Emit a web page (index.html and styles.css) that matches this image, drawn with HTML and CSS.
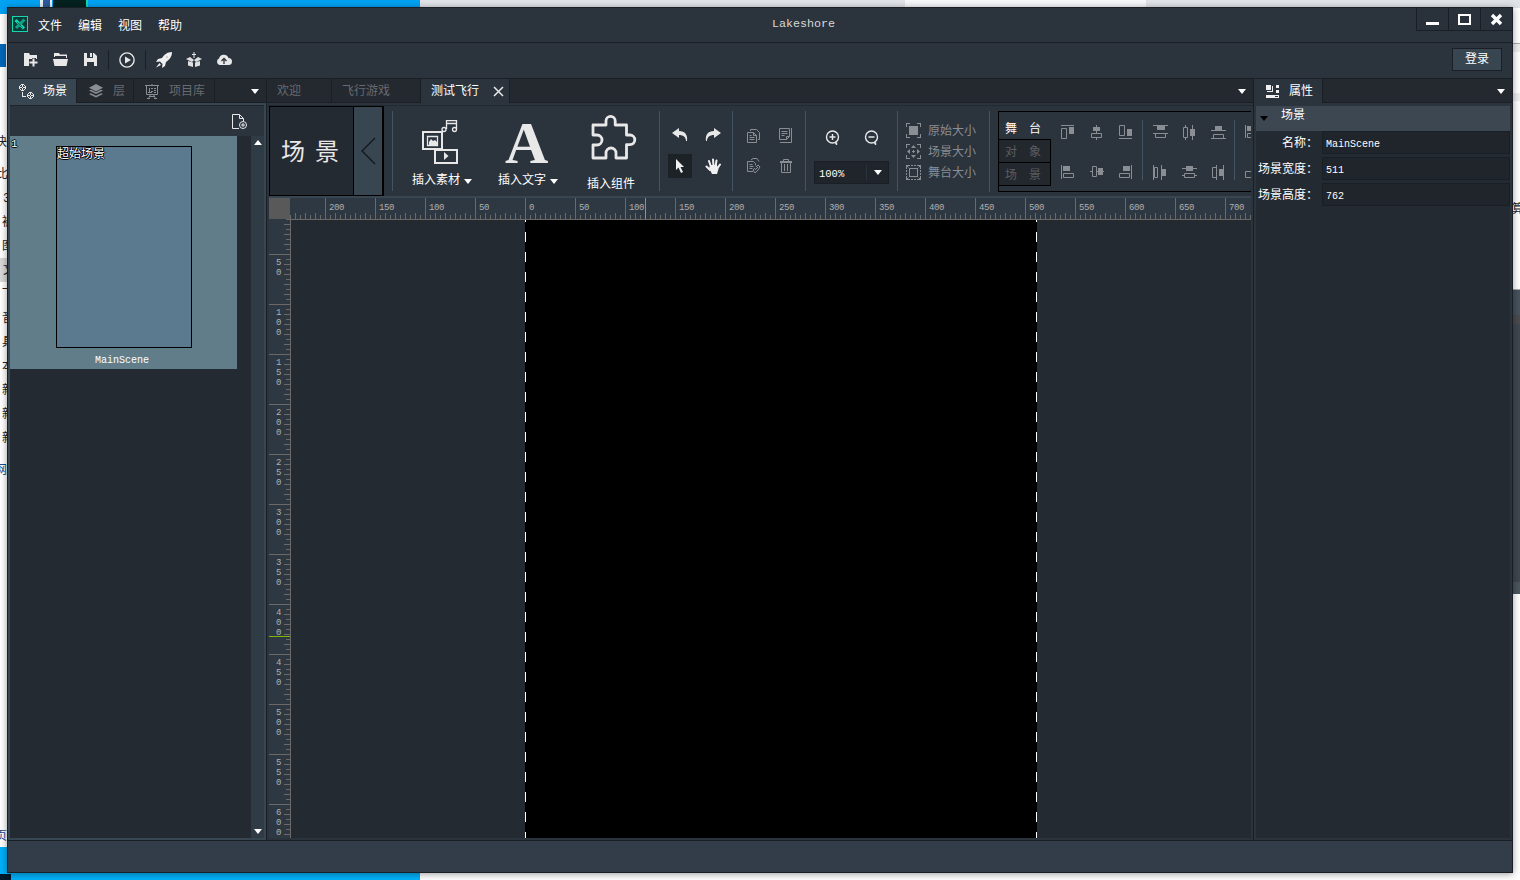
FILE: index.html
```
<!DOCTYPE html>
<html lang="zh-CN">
<head>
    <meta charset="UTF-8">
    <title>Lakeshore</title>

    <link rel="stylesheet" href="styles.css">
</head>
<body>

<div class="desktop">

    <!-- what sticks out from behind the window -->
    <div class="desktop__browser"></div>
    <div class="desktop__page"></div>
    <div class="desktop__blue"></div>
    <div class="desktop__mark"></div>
    <div class="desktop__app"></div>
    <div class="desktop__app-bottom"></div>
    <div class="desktop__shortcut"></div>
    <div class="desktop__tile"></div>
    <span class="desktop__text" style="left: -5px; top: 136px">快</span>
    <span class="desktop__text" style="left: -4px; top: 168px">比</span>
    <span class="desktop__text" style="left: 3px; top: 192px">3</span>
    <span class="desktop__text" style="left: 2px; top: 216px">被</span>
    <span class="desktop__text" style="left: 2px; top: 240px">图</span>
    <span class="desktop__text desktop__text--active" style="left: 0; top: 258px">文</span>
    <span class="desktop__text" style="left: 2px; top: 284px">一</span>
    <span class="desktop__text" style="left: 2px; top: 312px">音</span>
    <span class="desktop__text" style="left: 2px; top: 336px">具</span>
    <span class="desktop__text" style="left: 2px; top: 360px">本</span>
    <span class="desktop__text" style="left: 2px; top: 384px">新</span>
    <span class="desktop__text" style="left: 2px; top: 408px">新</span>
    <span class="desktop__text" style="left: 2px; top: 432px">新</span>
    <span class="desktop__text desktop__text--blue" style="left: -5px; top: 464px">网</span>
    <span class="desktop__text desktop__text--blue" style="left: -5px; top: 830px">页</span>
    <span class="desktop__text" style="left: 1512px; top: 203px">算</span>

    <div class="window">

        <div class="titlebar">
            <svg class="titlebar__logo" width="16" height="16" viewBox="0 0 16 16">
                <rect x=".5" y=".5" width="15" height="15" fill="#0b3b38" stroke="#14d7b0"/>
                <path d="M3.500 4l8.500 8.500" stroke="#14d7b0" stroke-width="3"/>
                <path d="M12.500 3.500L4 12" stroke="#0fa488" stroke-width="3"/>
                <path d="M5 6l5.500 5.500" stroke="#0b6a5c"/>
            </svg>
            <ul class="menu">
                <li>文件</li>
                <li>编辑</li>
                <li>视图</li>
                <li>帮助</li>
            </ul>
            <div class="titlebar__name">Lakeshore</div>
            <div class="controls">
                <button type="button" class="controls__btn">
                    <svg width="13" height="13"><path d="M0 9h13v3H0z" fill="#fff"/></svg>
                </button>
                <button type="button" class="controls__btn">
                    <svg width="13" height="13"><path d="M1 2h11v9H1z" fill="none" stroke="#fff" stroke-width="2"/></svg>
                </button>
                <button type="button" class="controls__btn">
                    <svg width="13" height="13"><path d="M2 2l9 9M11 2l-9 9" stroke="#fff" stroke-width="3.4"/></svg>
                </button>
            </div>
        </div>

        <div class="toolbar">
            <svg class="toolbar__icon" width="16" height="16" viewBox="0 0 16 16">
                <path d="M1 1h5l1 2h7v4H6v7H1z" fill="#e8e8e8"/>
                <path d="M11 6v9M6 10.500h9" stroke="#2b333d" stroke-width="4"/>
                <path d="M10.500 6.500v8M6.500 10.500h8" stroke="#e8e8e8" stroke-width="2"/>
            </svg>
            <svg class="toolbar__icon" width="16" height="16" viewBox="0 0 16 16">
                <path d="M1 1h5l1 1.500h7V6h-1V4H2v1H1zM0 7h15l-1.500 7h-12z" fill="#e8e8e8"/>
            </svg>
            <svg class="toolbar__icon toolbar__icon--save" width="16" height="16" viewBox="0 0 16 16">
                <path d="M1 1h10l3 3v10H1z" fill="#e8e8e8"/>
                <path d="M4 1h6v5H4zM4 10h7v4H4z" fill="#2b333d"/>
                <path d="M7 1h2v4H7z" fill="#e8e8e8"/>
            </svg>
            <span class="toolbar__line"></span>
            <svg class="toolbar__icon" width="16" height="16" viewBox="0 0 16 16">
                <circle cx="8" cy="8" r="7.1" fill="none" stroke="#e8e8e8" stroke-width="1.4"/>
                <path d="M6 4.500l6 3.500-6 3.500z" fill="#e8e8e8"/>
            </svg>
            <span class="toolbar__line"></span>
            <svg class="toolbar__icon" width="16" height="16" viewBox="0 0 16 16">
                <path d="M16 0c-5 0-8 3-10 6L2 7 0 10l4-.5L6.500 12 6 16l3-2 1-4c3-2 6-5 6-10z" fill="#f0f0f0"/>
                <path d="M3.500 11L0 15.500 5 13z" fill="#f0f0f0"/>
                <circle cx="11" cy="5" r="1.300" fill="#cfd3d6"/>
            </svg>
            <svg class="toolbar__icon" width="16" height="16" viewBox="0 0 16 16">
                <path d="M2 9l5 1.500V15l-5-1.500zM9 10.500L14 9v4.500L9 15zM0 7l4-2 4 3-2 2zM16 7l-4-2-4 3 2 2z" fill="#e0e0e0"/>
                <path d="M8 0v6M6 2.500h4" fill="none" stroke="#e8e8e8"/>
            </svg>
            <svg class="toolbar__icon" width="16" height="16" viewBox="0 0 16 16">
                <path d="M3.500 13a3.500 3.500 0 0 1-.5-6.500 5 5 0 0 1 9.500-.5 3.500 3.500 0 0 1 0 7z" fill="#e8e8e8"/>
                <path d="M8 12V6.500M5.500 9L8 6.500 10.500 9" fill="none" stroke="#2b333d" stroke-width="1.300"/>
            </svg>
            <button type="button" class="login">登录</button>
        </div>

        <div class="main">

            <!-- scenes -->
            <div class="panel panel--scenes">
                <div class="tabs">
                    <div class="tab tab--scene tab--active">
                        <svg width="15" height="15" viewBox="0 0 15 15" shape-rendering="crispEdges" fill="#e8e8e8">
                            <path d="M2 0h3v1H2zM2 6h3v1H2zM0 2h1v3H0zM6 2h1v3H6zM1 1h1v1H1zM5 1h1v1H5zM1 5h1v1H1zM5 5h1v1H5zM3 1h1v2H3zM3 4h1v2H3zM1 3h2v1H1zM4 3h2v1H4z"/>
                            <path d="M10 8h3v1h-3zM10 14h3v1h-3zM8 10h1v3H8zM14 10h1v3h-1zM9 9h1v1H9zM13 9h1v1h-1zM9 13h1v1H9zM13 13h1v1h-1zM11 9h1v2h-1zM11 12h1v2h-1zM9 11h2v1H9zM12 11h2v1h-2z"/>
                            <path d="M3 8h1v4h3v1H3z"/>
                        </svg>
                        场景
                    </div>
                    <div class="tab tab--layer">
                        <svg width="14" height="14" viewBox="0 0 14 14" fill="#8a8d91">
                            <path d="M7 0l7 3.700-7 3.700L0 3.700zM0 6.500l2-.8 5 2.600 5-2.600 2 .8-7 3.600zM0 10l2-.8 5 2.600 5-2.600 2 .8-7 3.600z"/>
                        </svg>
                        层
                    </div>
                    <div class="tab tab--library">
                        <svg width="15" height="15" viewBox="0 0 15 15" fill="none" stroke="#8a8d91">
                            <path d="M0 1.500h14M1.500 1.500v9h11v-9M7 0v1M3.500 14.500l2-4M10.500 14.500l-2-4M2 14.500h3M9 14.500h3M4 12.500h6"/>
                            <path d="M4.500 4v4M6 4.500h2M6 7.500h2M9 4.500h2M9 6.500h2M9 8.500h2M3 8.500h4" />
                        </svg>
                        项目库
                    </div>
                    <span class="caret tabs__caret"></span>
                </div>
                <div class="scenes">
                    <div class="scenes__head">
                        <svg width="16" height="16" viewBox="0 0 16 16" fill="none" stroke="#e8e8e8">
                            <path d="M7 14.500H.5V.5h7l4 4V7M7.500.5v4h4"/>
                            <circle cx="11" cy="11" r="3.500"/>
                            <path d="M11 9v4M9 11h4"/>
                        </svg>
                    </div>
                    <div class="scenes__body">
                        <div class="scene">
                            <span class="scene__number">1</span>
                            <div class="scene__preview">超始场景</div>
                            <div class="scene__name">MainScene</div>
                        </div>
                        <div class="scroll">
                            <span class="caret caret--up"></span>
                            <span class="caret"></span>
                        </div>
                    </div>
                </div>
            </div>

            <!-- editor -->
            <div class="panel panel--editor">
                <div class="tabs">
                    <div class="tab tab--welcome">欢迎</div>
                    <div class="tab tab--game">飞行游戏</div>
                    <div class="tab tab--test tab--active">
                        测试飞行
                        <svg width="11" height="11"><path d="M1 1l9 9M10 1l-9 9" stroke="#e8e8e8" stroke-width="1.500"/></svg>
                    </div>
                    <span class="caret tabs__caret"></span>
                </div>

                <div class="editor">
                    <div class="ribbon">
                        <div class="mode">
                            <div class="mode__name">场景</div>
                            <div class="mode__back">
                                <svg width="15" height="28"><path d="M14 1L1 14l13 13" fill="none" stroke="#12161b" stroke-width="1.300"/></svg>
                            </div>
                        </div>

                        <div class="group group--insert">
                            <div class="insert">
                                <div class="insert__icon">
                                    <svg width="36" height="45" viewBox="0 0 36 45">
                                        <g fill="none" stroke="#e8e8e8" stroke-width="2">
                                            <path d="M1 12h19v17H1zM13 30h22v13H13z"/>
                                        </g>
                                        <g fill="none" stroke="#e8e8e8" stroke-width="1.300">
                                            <path d="M5.500 16.500h10v9h-10zM24.500 9V.7h10V9M24.500 3.500h10" />
                                            <circle cx="22" cy="9.500" r="2"/>
                                            <circle cx="32.500" cy="9.500" r="2"/>
                                        </g>
                                        <path d="M7 22l2-3 2 2 2-1 3 3v3H7zM22 32l4.500 4-4.500 4z" fill="#e8e8e8"/>
                                    </svg>
                                </div>
                                <div class="insert__label">插入素材<span class="caret caret--small"></span></div>
                            </div>
                            <div class="insert">
                                <div class="insert__icon insert__icon--letter">A</div>
                                <div class="insert__label">插入文字<span class="caret caret--small"></span></div>
                            </div>
                            <div class="insert insert--component">
                                <div class="insert__icon">
                                    <svg width="46" height="45" viewBox="0 0 46 45">
                                        <path d="M2 10h13V6a4.600 4.600 0 0 1 9.200 0v4h11.300v10H39a4.800 4.800 0 0 1 0 9.600h-3.500V43H25v-5a5 5 0 0 0-10 0v5H2V30h4a5 5 0 0 0 0-10H2z" fill="none" stroke="#e8e8e8" stroke-width="2.800" stroke-linejoin="round"/>
                                    </svg>
                                </div>
                                <div class="insert__label">插入组件</div>
                            </div>
                        </div>

                        <div class="group group--tools">
                            <div class="tool">
                                <svg width="16" height="14" viewBox="0 0 16 14"><path d="M0 5L7 0v3c6 0 9 4 8 10h-1C14 9 11 7 7 7v3z" fill="#e8e8e8"/></svg>
                            </div>
                            <div class="tool">
                                <svg width="16" height="14" viewBox="0 0 16 14"><path d="M16 5L9 0v3C3 3 0 7 1 13h1C2 9 5 7 9 7v3z" fill="#e8e8e8"/></svg>
                            </div>
                            <div class="tool tool--active">
                                <svg width="10" height="14" viewBox="0 0 10 14"><path d="M1 0v11l2.500-2.500L6 14l2-1-2.500-5H9z" fill="#f0f0f0"/></svg>
                            </div>
                            <div class="tool">
                                <svg width="16" height="16" viewBox="0 0 16 16">
                                    <path d="M5 12L1.500 8.500M6 9L4 3M8.500 8L8 1.500M10.500 9l1-6.500M12 11l3-4.500" stroke="#f0f0f0" stroke-width="2" stroke-linecap="round"/>
                                    <path d="M4 10l1.500-3h6.500l1.500 4-1.500 5H7z" fill="#f0f0f0"/>
                                </svg>
                            </div>
                        </div>

                        <div class="group group--edit">
                            <div class="tool">
                                <svg width="14" height="16" viewBox="0 0 14 16" fill="none" stroke="#8a8d91">
                                    <path d="M.5 4.500h6l3 3v7h-9zM6.500 4.500v3h3M3.500 3V1.500h6l3 3v7H11M2.500 7.500h2M2.500 9.500h5M2.500 11.500h5"/>
                                </svg>
                            </div>
                            <div class="tool">
                                <svg width="14" height="16" viewBox="0 0 14 16" fill="none" stroke="#8a8d91">
                                    <path d="M.5.500h10v8l-3 3h-7zM7.500 11.500v-3h3M2.500 3.500h6M2.500 5.500h6M2.500 7.500h3M12.500 0v14.500H1"/>
                                </svg>
                            </div>
                            <div class="tool">
                                <svg width="14" height="16" viewBox="0 0 14 16" fill="none" stroke="#8a8d91">
                                    <path d="M6 13.500H.5v-10h6l2 2v2M2.500 6.500h3M2.500 8.500h4M2.500 10.500h3M4 2l2-1.500h4l2 3M9 9l2-2 2 2-2 3M8 10l-2 2 2 3 3-3M8 12l3-3"/>
                                </svg>
                            </div>
                            <div class="tool">
                                <svg width="12" height="14" viewBox="0 0 12 14" fill="none" stroke="#8a8d91">
                                    <path d="M0 3h12" stroke-width="2"/>
                                    <path d="M3.500 2V.5h5V2M1.500 4v9.500h9V4M4.500 5v7M7.500 5v7"/>
                                </svg>
                            </div>
                        </div>

                        <div class="group group--zoom">
                            <div class="zoom">
                                <svg width="16" height="16" viewBox="0 0 16 16" fill="none" stroke="#e8e8e8" stroke-width="1.400">
                                    <circle cx="7.500" cy="7" r="6"/><path d="M7.500 4v6M4.500 7h6M10 13h1.500v2"/>
                                </svg>
                                <svg width="16" height="16" viewBox="0 0 16 16" fill="none" stroke="#e8e8e8" stroke-width="1.400">
                                    <circle cx="7.500" cy="7" r="6"/><path d="M4.500 7h6M10 13h1.500v2"/>
                                </svg>
                            </div>
                            <div class="select">
                                <span class="select__value">100%</span>
                                <span class="select__arrow"><span class="caret"></span></span>
                            </div>
                        </div>

                        <div class="group group--size">
                            <div class="size">
                                <svg width="15" height="15" viewBox="0 0 15 15" fill="none" stroke="#8a8d91">
                                    <path d="M0 .5h4M.5 0v4M11 .5h4M14.500 0v4M0 14.500h4M.5 11v4M11 14.500h4M14.500 11v4"/>
                                    <path d="M3 3h9v9H3z" fill="#8a8d91" stroke="none"/>
                                </svg>
                                <span>原始大小</span>
                            </div>
                            <div class="size">
                                <svg width="15" height="15" viewBox="0 0 15 15" fill="none" stroke="#8a8d91">
                                    <path d="M0 .5h4M.5 0v4M11 .5h4M14.500 0v4M0 14.500h4M.5 11v4M11 14.500h4M14.500 11v4M7.500 6v3M6 7.500h3"/>
                                    <path d="M7.500 1l2.500 3H5zM7.500 14L5 11h5zM1 7.500L4 5v5zM14 7.500L11 5v5z" fill="#8a8d91" stroke="none"/>
                                </svg>
                                <span>场景大小</span>
                            </div>
                            <div class="size">
                                <svg width="15" height="15" viewBox="0 0 15 15" fill="none" stroke="#8a8d91">
                                    <path d="M0 .5h4M.5 0v4M11 .5h4M14.500 0v4M0 14.500h4M.5 11v4M11 14.500h4M14.500 11v4M3.500 3.500h8v8h-8z"/>
                                    <path d="M1 1l3 3M14 1l-3 3M1 14l3-3M14 14l-3-3M5 .5h5M5 14.500h5M.5 5v5M14.500 5v5" stroke-dasharray="2 1"/>
                                </svg>
                                <span>舞台大小</span>
                            </div>
                        </div>

                        <div class="align">
                            <ul class="align__modes">
                                <li class="align__mode align__mode--active">舞台</li>
                                <li class="align__mode">对象</li>
                                <li class="align__mode">场景</li>
                            </ul>
                            <div class="align__icons">
                                <svg width="15" height="15"><path class="line" d="M0 .5h13M.5 3.500h5v10h-5z"/><path class="fill" d="M8 2h5v7H8z"/></svg>
                                <svg width="15" height="15"><path class="line" d="M6.500 0v15M1.500 8.500h10v4h-10z"/><path class="fill" d="M3 2h7v4H3z"/><path class="hole" d="M2 9h9v3H2z"/></svg>
                                <svg width="15" height="15"><path class="line" d="M0 13.500h13M.5.5h5v10h-5z"/><path class="fill" d="M8 4h5v7H8z"/></svg>
                                <svg width="15" height="15"><path class="line" d="M.5 0v14M2.500 8.500h10v4h-10z"/><path class="fill" d="M2 1h7v5H2z"/></svg>
                                <svg width="15" height="15"><path class="line" d="M0 6.500h14M2.500 1.500h4v10h-4z"/><path class="fill" d="M8 3h5v7H8z"/><path class="hole" d="M3 2h3v9H3z"/></svg>
                                <svg width="15" height="15"><path class="line" d="M12.500 0v14M.5 8.500h10v4H.5z"/><path class="fill" d="M4 1h7v5H4z"/></svg>
                            </div>
                            <span class="align__line"></span>
                            <div class="align__icons">
                                <svg width="15" height="15"><path class="line" d="M0 .5h15M0 8.500h15M2.500 8.500h10v4h-10z"/><path class="fill" d="M4 1h8v4H4z"/></svg>
                                <svg width="15" height="15"><path class="line" d="M3.500 0v15M10.500 0v15M1.500 2.500h4v10h-4z"/><path class="hole" d="M2 3h3v9H2z"/><path class="fill" d="M8 4h5v7H8z"/></svg>
                                <svg width="15" height="15"><path class="line" d="M0 5.500h15M0 13.500h15M2.500 9.500h10v4h-10z"/><path class="fill" d="M4 1h7v5H4z"/></svg>
                                <svg width="15" height="15"><path class="line" d="M.5 0v15M8.500 0v15M1.500 2.500h3v10h-3z"/><path class="fill" d="M9 4h4v7H9z"/></svg>
                                <svg width="15" height="15"><path class="line" d="M0 3.500h15M0 10.500h15M2.500 8.500h10v4h-10z"/><path class="fill" d="M4 1h7v5H4z"/><path class="hole" d="M3 9h9v3H3z"/></svg>
                                <svg width="15" height="15"><path class="line" d="M5.500 0v15M12.500 0v15M1.500 2.500h4v10h-4z"/><path class="fill" d="M8 4h5v7H8z"/></svg>
                            </div>
                            <span class="align__line"></span>
                            <div class="align__icons align__icons--last">
                                <svg width="15" height="15"><path class="line" d="M.5 0v13M2.500 8.500h10v4h-10z"/><path class="fill" d="M2 1h7v5H2z"/></svg>
                                <svg width="15" height="15"><path class="line" d="M.5 6.500h10v6H.5z"/></svg>
                            </div>
                        </div>
                    </div>

                    <div class="work">
                        <div class="work__corner"></div>
                        <div class="ruler">
                            <span>200</span>
                            <span>150</span>
                            <span>100</span>
                            <span>50</span>
                            <span>0</span>
                            <span>50</span>
                            <span class="ruler__pointer">100</span>
                            <span>150</span>
                            <span>200</span>
                            <span>250</span>
                            <span>300</span>
                            <span>350</span>
                            <span>400</span>
                            <span>450</span>
                            <span>500</span>
                            <span>550</span>
                            <span>600</span>
                            <span>650</span>
                            <span>700</span>
                        </div>
                        <div class="vruler">
                            <span>50</span>
                            <span>100</span>
                            <span>150</span>
                            <span>200</span>
                            <span>250</span>
                            <span>300</span>
                            <span>350</span>
                            <span class="vruler__pointer">400</span>
                            <span>450</span>
                            <span>500</span>
                            <span>550</span>
                            <span>600</span>
                        </div>
                        <div class="canvas">
                            <div class="stage"></div>
                        </div>
                    </div>
                </div>
            </div>

            <!-- properties -->
            <div class="panel panel--props">
                <div class="tabs">
                    <div class="tab tab--props tab--active">
                        <svg width="13" height="13" viewBox="0 0 13 13" fill="#f0f0f0">
                            <path d="M0 0h5v5H0zM6 1h1v6H1V6h5zM10 0h3v3h-3zM10 5h3v3h-3zM0 10h13v3H0z"/>
                            <path d="M9 11h3v1H9z" fill="#2b333d"/>
                        </svg>
                        属性
                    </div>
                    <span class="caret tabs__caret"></span>
                </div>
                <div class="props">
                    <div class="props__title"><span class="caret caret--black"></span>场景</div>
                    <div class="props__row"><span class="props__label">名称：</span><span class="props__value">MainScene</span></div>
                    <div class="props__row"><span class="props__label">场景宽度：</span><span class="props__value">511</span></div>
                    <div class="props__row"><span class="props__label">场景高度：</span><span class="props__value">762</span></div>
                </div>
            </div>

        </div>

        <div class="status"></div>
    </div>
</div>

</body>
</html>
```

FILE: styles.css
```
*{
    box-sizing: border-box;
}
body{
    margin: 0;
    font: 12px/14px "Liberation Mono", "Noto Sans CJK SC", monospace;
    color: #fff;
}
ul{
    margin: 0;
    padding: 0;
    list-style: none;
}
button{
    font: inherit;
    color: inherit;
    padding: 0;
}
svg{
    display: block;
    flex: none;
}

/* desktop */
.desktop{
    position: relative;
    width: 1520px;
    height: 880px;
    overflow: hidden;
    background-color: #fff;
}
.desktop__browser{
    position: absolute;
    left: 420px;
    right: 0;
    top: 0;
    height: 8px;
    background: linear-gradient(to right, #e0e4e8 485px, #f7f8f9 485px, #f7f8f9 726px, #e0e4e8 726px);
}
.desktop__page{
    position: absolute;
    left: 1513px;
    top: 43px;
    width: 7px;
    height: 58px;
    border-top: 1px solid #aaa;
    border-bottom: 8px solid #eee;
    background: linear-gradient(#eee 8px, #fff 8px);
}
.desktop__blue{
    position: absolute;
    left: 0;
    top: 0;
    width: 420px;
    height: 880px;
    background: linear-gradient(#00a2f4 14px, #fff 14px, #fff 847px, #00b0f8 847px);
}
.desktop__mark{
    position: absolute;
    left: 0;
    top: 44px;
    width: 6px;
    height: 23px;
    background-color: #0067b8;
}
.desktop__app{
    position: absolute;
    left: 1513px;
    top: 289px;
    width: 7px;
    height: 305px;
    border-top: 1px solid #aaa;
    border-bottom: 12px solid #4a555e;
    background: linear-gradient(#46525d 25px, #4b4b4d 25px, #4b4b4d 34px, #41474f 34px);
}
.desktop__app-bottom{
    position: absolute;
    left: 0;
    top: 874px;
    width: 11px;
    height: 6px;
    background-color: #04182a;
}
.desktop__shortcut{
    position: absolute;
    left: 40px;
    top: 0;
    width: 12px;
    height: 8px;
    background-color: #2c5a9c;
    border: solid #e8eef4;
    border-width: 0 2px 0 3px;
}
.desktop__tile{
    position: absolute;
    left: 53px;
    top: 0;
    width: 35px;
    height: 8px;
    background-color: #04221f;
    border-right: 2px solid #14d7b0;
}
.desktop__text{
    position: absolute;
    color: #222;
}
.desktop__text--active{
    padding: 6px 0 4px 3px;
    background-color: #d8d8d8;
}
.desktop__text--blue{
    color: #1a4a8a;
}

/* window */
.window{
    position: absolute;
    left: 7px;
    top: 7px;
    width: 1506px;
    height: 866px;
    display: flex;
    flex-direction: column;
    border: 1px solid #1a1f25;
    background-color: #2b333d;
    box-shadow: 0 1px 7px rgba(0, 0, 0, .4);
}
.titlebar{
    display: flex;
    height: 35px;
    border-bottom: 1px solid #1a1f25;
}
.titlebar__logo{
    margin: 8px 10px 0 4px;
}
.menu{
    display: flex;
    gap: 16px;
    width: 734px;
    padding-top: 12px;
}
.titlebar__name{
    padding-top: 9px;
    font-size: 11.7px;
    color: #d8d8d8;
}
.controls{
    display: flex;
    height: 23px;
    margin-left: auto;
    border-bottom: 1px solid #1a1f25;
}
.controls__btn{
    display: flex;
    align-items: center;
    justify-content: center;
    width: 32px;
    border: none;
    border-left: 1px solid #1a1f25;
    background-color: #29323a;
}

.toolbar{
    display: flex;
    align-items: center;
    height: 36px;
    padding: 0 10px 2px 15px;
    border-bottom: 1px solid #1a1f25;
}
.toolbar__icon{
    margin-right: 14px;
}
.toolbar__icon--save{
    margin-right: 9px;
}
.toolbar__line{
    width: 1px;
    height: 20px;
    margin-right: 10px;
    background-color: #1a1f25;
}
.toolbar__line + .toolbar__icon{
    margin-right: 10px;
}
.toolbar__line ~ .toolbar__line ~ .toolbar__icon{
    margin-right: 14px;
}
.login{
    width: 50px;
    height: 23px;
    margin-left: auto;
    border: 1px solid #1a1f25;
    background-color: #384652;
}

.main{
    display: flex;
    height: 761px;
}
.panel{
    display: flex;
    flex-direction: column;
    height: 761px;
}
.panel--scenes{
    width: 258px;
}
.panel--editor{
    width: 987px;
    border-left: 1px solid #1a1f25;
}
.panel--props{
    width: 259px;
    border-left: 1px solid #1a1f25;
}

/* tabs */
.tabs{
    display: flex;
    flex: none;
    align-items: center;
    height: 24px;
    background-color: #24282f;
    box-shadow: inset 0 -1px #1a1f25;
}
.tab{
    display: flex;
    align-items: center;
    height: 23px;
    padding-top: 2px;
    margin-bottom: 1px;
    border-right: 1px solid #1a1f25;
    color: #686b70;
}
.tab svg{
    margin-top: -1px;
}
.tab--active{
    height: 24px;
    margin-bottom: 0;
    color: #fff;
    background-color: #2b333d;
}
.tab--scene{
    width: 69px;
    gap: 9px;
    padding-left: 11px;
    background-color: #384652;
}
.tab--layer{
    width: 57px;
    gap: 10px;
    padding-left: 12px;
}
.tab--library{
    width: 81px;
    gap: 9px;
    padding-left: 11px;
}
.tab--welcome{
    width: 65px;
    padding-left: 10px;
}
.tab--game{
    width: 89px;
    padding-left: 10px;
}
.tab--test{
    width: 89px;
    gap: 14px;
    padding-left: 10px;
}
.tab--props{
    width: 69px;
    gap: 10px;
    padding-left: 12px;
}
.caret{
    width: 0;
    border: 4px solid transparent;
    border-top: 5px solid #fff;
    border-bottom: none;
}
.caret--up{
    border-top: none;
    border-bottom: 5px solid #fff;
}
.caret--small{
    display: inline-block;
    margin-left: 4px;
}
.caret--black{
    border-top-color: #000;
}
.tabs__caret{
    margin: 0 7px 0 auto;
}

/* scenes */
.scenes{
    display: flex;
    flex-direction: column;
    flex: 1;
    padding: 2px;
    background-color: #384652;
}
.scenes__head{
    display: flex;
    justify-content: flex-end;
    height: 31px;
    padding: 8px 16px 0 0;
    border-top: 1px solid #1f252c;
    background-color: #2b333d;
}
.scenes__body{
    display: flex;
    flex: 1;
    justify-content: space-between;
    background-color: #242a32;
}
.scene{
    position: relative;
    width: 227px;
    height: 233px;
    padding: 10px 0 0 46px;
    background-color: #617d8a;
}
.scene__number{
    position: absolute;
    left: 1px;
    top: 1px;
    font-size: 11px;
    text-shadow: 1px 0 #000, -1px 0 #000, 0 1px #000, 0 -1px #000;
}
.scene__preview{
    width: 136px;
    height: 202px;
    padding-top: 1px;
    border: 1px solid #000;
    background-color: #5b7a90;
    text-shadow: 1px 0 #000, -1px 0 #000, 0 1px #000, 0 -1px #000;
}
.scene__name{
    padding: 6px 0 0 39px;
    font-size: 10px;
}
.scroll{
    display: flex;
    flex-direction: column;
    align-items: center;
    justify-content: space-between;
    width: 13px;
    padding: 4px 0;
    background-color: #2f3b45;
}

/* ribbon */
.editor{
    flex: 1;
    padding: 3px 2px 2px;
    background: linear-gradient(transparent 2px, #222930 2px, #222930 3px, transparent 3px);
}
.ribbon{
    display: flex;
    height: 90px;
    overflow: hidden;
}
.mode{
    display: flex;
    flex: none;
    width: 115px;
    margin-right: 8px;
    border: 1px solid #000;
    border-right-width: 2px;
}
.mode__name{
    display: flex;
    align-items: center;
    width: 83px;
    padding: 5px 0 0 11px;
    font-size: 24px;
    letter-spacing: 10px;
    white-space: nowrap;
    overflow: hidden;
    color: #e8e8e8;
    background-color: #242a32;
}
.mode__back{
    display: flex;
    flex: 1;
    align-items: center;
    justify-content: center;
    border-left: 1px solid #000;
    background-color: #384652;
}
.group{
    flex: none;
    height: 80px;
    margin-top: 5px;
    border-left: 1px solid #435465;
}
.group--insert{
    display: flex;
    gap: 26px;
    width: 267px;
    padding-left: 19px;
}
.insert{
    width: 60px;
}
.insert__icon{
    display: flex;
    align-items: center;
    height: 63px;
    padding-left: 10px;
}
.insert__icon--letter{
    padding: 0 0 0 7px;
    font: bold 60px/60px "Liberation Serif", serif;
    color: #e8e8e8;
}
.insert__label{
    white-space: nowrap;
}
.insert--component{
    margin-left: 3px;
}
.insert--component .insert__icon{
    height: 67px;
    padding: 0 0 14px 4px;
}
.group--tools,
.group--edit{
    display: grid;
    grid-template-columns: 24px 24px;
    grid-template-rows: 24px 24px;
    gap: 7px 9px;
    width: 73px;
    padding: 12px 0 0 8px;
}
.group--edit{
    padding: 13px 0 0 9px;
    gap: 6px 8px;
}
.tool{
    display: flex;
    align-items: center;
    justify-content: center;
}
.tool--active{
    background-color: #1d2227;
}
.group--zoom{
    width: 92px;
    padding: 19px 0 0 8px;
}
.zoom{
    display: flex;
    gap: 23px;
    padding-left: 11px;
}
.select{
    display: flex;
    width: 75px;
    height: 23px;
    margin-top: 15px;
    border: 1px solid #1a1f25;
    background-color: #20252b;
}
.select__value{
    width: 51px;
    padding: 5px 0 0 4px;
    font-size: 10.5px;
}
.select__arrow{
    display: flex;
    flex: 1;
    align-items: center;
    justify-content: center;
    margin: 3px 0;
    border-left: 1px solid #2b333d;
}
.group--size{
    display: flex;
    flex-direction: column;
    gap: 6px;
    width: 92px;
    padding: 12px 0 0 8px;
}
.size{
    display: flex;
    align-items: center;
    gap: 7px;
    height: 15px;
    color: #8a8d91;
}
.size span{
    padding-top: 2px;
}
.align{
    display: flex;
    flex: none;
    width: 262px;
    height: 81px;
    margin-top: 5px;
    overflow: hidden;
    border-left: 1px solid #435465;
    background:
        linear-gradient(#000, #000) 8px 0 / 300px 1px no-repeat,
        linear-gradient(#000, #000) 8px 80px / 300px 1px no-repeat;
}
.align > *{
    flex: none;
}
.align__modes{
    width: 53px;
    margin-left: 8px;
    border-left: 1px solid #000;
}
.align__mode{
    height: 23px;
    padding: 6px 0 0 6px;
    letter-spacing: 12px;
    white-space: nowrap;
    overflow: hidden;
    color: #5b5d60;
    border-right: 1px solid #000;
    border-bottom: 1px solid #000;
    background-color: #23282f;
}
.align__mode--active{
    height: 29px;
    padding-top: 12px;
    color: #fff;
    border-right: none;
    background-color: transparent;
}
.align__icons{
    display: grid;
    grid-template-columns: 15px 15px 15px;
    gap: 25px 14px;
    align-content: start;
    padding: 14px 0 0 10px;
}
.align__icons--last{
    grid-template-columns: 15px;
}
.align__line{
    width: 1px;
    height: 60px;
    margin: 9px 0 0 8px;
    background-color: #435465;
}
.line{
    fill: none;
    stroke: #8a8d91;
}
.fill{
    fill: #8a8d91;
}
.hole{
    fill: #2b333d;
}

/* rulers and stage */
.work{
    display: grid;
    grid-template-columns: 21px 961px;
    grid-template-rows: 21px 619px;
    border-top: 2px solid #384652;
}
.work__corner{
    background-color: #595959;
}
.ruler{
    display: flex;
    height: 22px;
    padding-left: 35px;
    overflow: hidden;
    font-size: 9px;
    letter-spacing: -.4px;
    color: #b0b0b0;
    border-bottom: 1px solid #6b6865;
    background:
        repeating-linear-gradient(to right, transparent 0 5px, #6b6865 5px 6px, transparent 6px 10px) 0 100% / 100% 6px no-repeat,
        repeating-linear-gradient(to right, #6b6865 0 1px, transparent 1px 10px) 0 100% / 100% 4px no-repeat,
        #2d3843;
}
.ruler span{
    flex: none;
    width: 50px;
    padding: 3px 0 0 3px;
    border-left: 1px solid #6b6865;
}
.ruler .ruler__pointer{
    background: linear-gradient(#7db700, #7db700) 19px 0 / 1px 100% no-repeat;
}
.vruler{
    width: 22px;
    height: 619px;
    padding-top: 35px;
    overflow: hidden;
    font-size: 9px;
    line-height: 10px;
    color: #b0b0b0;
    border-right: 1px solid #6b6865;
    background:
        repeating-linear-gradient(to bottom, transparent 0 5px, #6b6865 5px 6px, transparent 6px 10px) 100% 0 / 6px 100% no-repeat,
        repeating-linear-gradient(to bottom, #6b6865 0 1px, transparent 1px 10px) 100% 0 / 4px 100% no-repeat,
        #2d3843;
}
.vruler span{
    display: block;
    width: 21px;
    height: 50px;
    padding: 3px 8px 0 7px;
    word-break: break-all;
    border-top: 1px solid #6b6865;
}
.vruler .vruler__pointer{
    background: linear-gradient(#7db700, #7db700) 0 31px / 100% 1px no-repeat;
}
.canvas{
    height: 618px;
    margin: 1px 0 0 1px;
    padding-left: 234px;
    background-color: #242a32;
}
.stage{
    width: 512px;
    height: 618px;
    background:
        repeating-linear-gradient(to bottom, #fff 0 2px, #000 2px 12px, #fff 12px 20px) 0 0 / 1px 100% no-repeat,
        repeating-linear-gradient(to bottom, #fff 0 2px, #000 2px 12px, #fff 12px 20px) 100% 0 / 1px 100% no-repeat,
        #000;
}

/* properties */
.props{
    flex: 1;
    margin: 3px 2px 2px;
    background-color: #242a32;
}
.props__title{
    display: flex;
    gap: 13px;
    height: 25px;
    padding: 3px 0 0 4px;
    background-color: #3c4752;
}
.props__title .caret{
    margin-top: 7px;
}
.props__row{
    display: flex;
    align-items: center;
    height: 23px;
    margin-bottom: 3px;
}
.props__label{
    width: 66px;
    padding: 3px 4px 0 0;
    text-align: right;
    white-space: nowrap;
}
.props__value{
    flex: 1;
    height: 23px;
    padding: 6px 0 0 3px;
    font-size: 10px;
    border: 1px solid #1a1f25;
    background-color: #20252b;
}

.status{
    height: 32px;
    border-top: 1px solid #1a1f25;
    background-color: #323d49;
}
```
